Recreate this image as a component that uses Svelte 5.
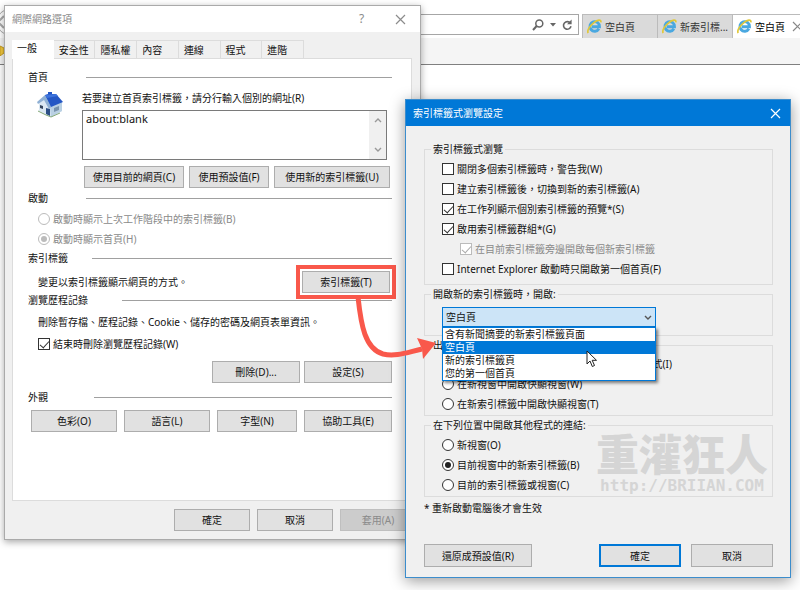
<script>
  const browserTabs = [
    { title: '空白頁', active: false },
    { title: '新索引標...', active: false },
    { title: '空白頁', active: true }
  ];
  const sheets = ['一般', '安全性', '隱私權', '內容', '連線', '程式', '進階'];
  const options = [
    { text: '關閉多個索引標籤時，警告我(W)', checked: false },
    { text: '建立索引標籤後，切換到新的索引標籤(A)', checked: false },
    { text: '在工作列顯示個別索引標籤的預覽*(S)', checked: true },
    { text: '啟用索引標籤群組*(G)', checked: true },
    { text: '在目前索引標籤旁邊開啟每個新索引標籤', checked: true, disabled: true },
    { text: 'Internet Explorer 啟動時只開啟第一個首頁(F)', checked: false }
  ];
  const popups = [
    '讓 Internet Explorer 決定開啟快顯視窗的方式(I)',
    '在新視窗中開啟快顯視窗(W)',
    '在新索引標籤中開啟快顯視窗(T)'
  ];
  const links = ['新視窗(O)', '目前視窗中的新索引標籤(B)', '目前的索引標籤或視窗(C)'];
  const pages = ['含有新聞摘要的新索引標籤頁面', '空白頁', '新的索引標籤頁', '您的第一個首頁'];
  let page = $state('空白頁');
  let home = $state('about:blank');
</script>

{#snippet cross()}
  <svg width="11" height="11" viewBox="0 0 11 11" aria-hidden="true"><path d="M1 1L10 10M10 1L1 10" fill="none" stroke="currentColor" stroke-width="1.2" /></svg>
{/snippet}

{#snippet heading(text, width)}
  <div class="heading"><h2 style:min-width="{width}px">{text}</h2><span></span></div>
{/snippet}

<div class="desktop">
  <header class="browser">
    <div class="nav">
      <svg class="back" width="28" height="28" viewBox="0 0 28 28" aria-hidden="true"><circle cx="14" cy="14" r="13" fill="#fff" stroke="#aaa" /><path d="M8 8L2 14L8 20" fill="none" stroke="#aaa" stroke-width="2" /></svg>
      <div class="address">
        <svg width="12" height="12" viewBox="0 0 12 12" aria-hidden="true"><circle cx="7.3" cy="4.5" r="3.5" fill="none" stroke="#666" stroke-width="1.5" /><path d="M4.7 7L1 11" stroke="#666" stroke-width="2" /></svg>
        <svg width="6" height="4" viewBox="0 0 6 4" aria-hidden="true"><path d="M0 0H6L3 3.5Z" fill="#666" /></svg>
        <svg width="11" height="12" viewBox="0 0 11 12" aria-hidden="true"><path d="M8.4 4.2A3.8 3.8 0 1 0 9 7.3" fill="none" stroke="#666" stroke-width="1.6" /><path d="M9.6 0.5V5.2H5Z" fill="#666" /></svg>
      </div>
      <div class="tabs">
        {#each browserTabs as tab}
          <div class="tab" class:active={tab.active}>
            <svg width="15" height="15" viewBox="0 0 15 15" aria-hidden="true">
              <path d="M11.9 9.8A4.8 4.8 0 1 1 12.5 7.8H5" fill="none" stroke="#4aa8e0" stroke-width="2.9" />
              <path d="M1.3 14C-0.3 12.3 2.5 7 6.6 3.8C10.5 0.6 14.5 0 13.8 3.4" fill="none" stroke="#e0c83a" stroke-width="1.7" />
            </svg>
            <span>{tab.title}</span>
            {#if tab.active}<i>{@render cross()}</i>{/if}
          </div>
        {/each}
      </div>
    </div>
    <div class="favorites">
      <svg width="12" height="12" viewBox="0 0 12 12" aria-hidden="true"><path d="M0 2L4 4L4 9L0 12Z" fill="#f3c93c" stroke="#c39a20" /></svg>
    </div>
  </header>

  <section class="window internet">
    <div class="title">
      <h1>網際網路選項</h1>
      <button class="plain help" type="button" aria-label="說明">?</button>
      <button class="plain" type="button" aria-label="關閉">{@render cross()}</button>
    </div>
    <div class="sheet">
      <nav class="sheet-tabs">
        {#each sheets as name, i}
          <button type="button" class:current={i === 0}>{name}</button>
        {/each}
      </nav>
      <div class="panel">
        {@render heading('首頁', 58)}
        <div class="home">
          <svg width="28" height="28" viewBox="0 0 28 28" aria-hidden="true">
            <path d="M3 10L10 5L22 12L26 11V20L15 26L3 20Z" fill="#dbe8f3" />
            <path d="M14 16L26 11V20L15 26Z" fill="#b9d0e3" />
            <path d="M1 11L9 4L15 16L13 18L8 9L2 13Z" fill="#8fb0d4" />
            <path d="M9 4L12 3V1H16V3L20 3L27 11L15 16Z" fill="#2457c5" />
            <path d="M9 4L20 3L22 5L11 7Z" fill="#3d73dc" />
            <path d="M10 17L14 18V25L10 23Z" fill="#2c4f85" />
            <path d="M4 14L7 15V18L4 17Z" fill="#35465e" />
            <path d="M18 17L23 15V19L18 21Z" fill="#7893ad" />
            <path d="M2 20L10 24L15 26L24 22" fill="none" stroke="#84a878" />
          </svg>
          <div class="home-fields">
            <label class="line" for="home">若要建立首頁索引標籤，請分行輸入個別的網址(R)</label>
            <div class="box">
              <textarea id="home" bind:value={home}></textarea>
              <div class="scroll">
                <svg width="8" height="5" viewBox="0 0 8 5" aria-hidden="true"><path d="M1 4L4 1L7 4" /></svg>
                <svg width="8" height="5" viewBox="0 0 8 5" aria-hidden="true"><path d="M1 1L4 4L7 1" /></svg>
              </div>
            </div>
            <div class="row home-buttons">
              <button class="btn w100" type="button">使用目前的網頁(C)</button>
              <button class="btn w80" type="button">使用預設值(F)</button>
              <button class="btn w116" type="button">使用新的索引標籤(U)</button>
            </div>
          </div>
        </div>

        {@render heading('啟動', 58)}
        <div class="indent startup">
          <label class="option off"><input type="radio" name="start" disabled />啟動時顯示上次工作階段中的索引標籤(B)</label>
          <label class="option off"><input type="radio" name="start" checked disabled />啟動時顯示首頁(H)</label>
        </div>

        {@render heading('索引標籤', 64)}
        <div class="indent row change">
          <p class="line">變更以索引標籤顯示網頁的方式。</p>
          <button class="btn w88 marked" type="button">索引標籤(T)</button>
        </div>

        {@render heading('瀏覽歷程記錄', 94)}
        <div class="indent history">
          <p class="line">刪除暫存檔、歷程記錄、Cookie、儲存的密碼及網頁表單資訊。</p>
          <label class="option"><input type="checkbox" checked />結束時刪除瀏覽歷程記錄(W)</label>
          <div class="row end">
            <button class="btn w88" type="button">刪除(D)...</button>
            <button class="btn w88" type="button">設定(S)</button>
          </div>
        </div>

        {@render heading('外觀', 66)}
        <div class="row looks">
          <button class="btn w86" type="button">色彩(O)</button>
          <button class="btn w86" type="button">語言(L)</button>
          <button class="btn w80" type="button">字型(N)</button>
          <button class="btn w88" type="button">協助工具(E)</button>
        </div>
      </div>
      <div class="row end footer">
        <button class="btn w76" type="button">確定</button>
        <button class="btn w76" type="button">取消</button>
        <button class="btn w76" type="button" disabled>套用(A)</button>
      </div>
    </div>
  </section>

  <section class="window tabbed">
    <div class="title">
      <h1>索引標籤式瀏覽設定</h1>
      <button class="plain" type="button" aria-label="關閉">{@render cross()}</button>
    </div>
    <div class="settings">
      <fieldset class="browse">
        <legend>索引標籤式瀏覽</legend>
        {#each options as o}
          <label class="option" class:off={o.disabled} class:sub={o.disabled}><input type="checkbox" checked={o.checked} disabled={o.disabled} />{o.text}</label>
        {/each}
      </fieldset>
      <fieldset class="opening">
        <legend><label for="page">開啟新的索引標籤時，開啟:</label></legend>
        <div class="combo">
          <select id="page" bind:value={page}>
            {#each pages as p}<option>{p}</option>{/each}
          </select>
          <svg class="chevron" width="8" height="5" viewBox="0 0 8 5" aria-hidden="true"><path d="M1 1L4 4L7 1" /></svg>
          <ul>
            {#each pages as p}<li class:picked={p === page}>{p}</li>{/each}
          </ul>
          <svg class="pointer" width="12" height="18" viewBox="0 0 12 18" aria-hidden="true"><path d="M1 1V14L4 11L6.3 16.5L8.5 15.5L6.2 10.3H10.5Z" fill="#fff" stroke="#222" /></svg>
        </div>
      </fieldset>
      <fieldset>
        <legend>出現快顯視窗時:</legend>
        {#each popups as text, i}
          <label class="option"><input type="radio" name="popup" checked={i === 0} />{text}</label>
        {/each}
      </fieldset>
      <fieldset class="links">
        <legend>在下列位置中開啟其他程式的連結:</legend>
        {#each links as text, i}
          <label class="option"><input type="radio" name="link" checked={i === 1} />{text}</label>
        {/each}
        <div class="watermark"><b>重灌狂人</b><span>http://BRIIAN.COM</span></div>
      </fieldset>
      <p class="line note">* 重新啟動電腦後才會生效</p>
      <div class="row actions">
        <button class="btn w108" type="button">還原成預設值(R)</button>
        <button class="btn w82 primary" type="button">確定</button>
        <button class="btn w82" type="button">取消</button>
      </div>
    </div>
  </section>

  <svg class="arrow" width="90" height="70" viewBox="350 295 90 70" aria-hidden="true">
    <path d="M358 297C361 325 365 349 383 354C396 357 408 352 422 349" fill="none" stroke="#f9584b" stroke-width="5" />
    <path d="M417 338L436 343L423 359L422 349Z" fill="#f9584b" />
  </svg>
</div>

<style>
  :global(body) { margin: 0; background: #fff; }
  * { box-sizing: border-box; }
  .desktop {
    position: relative; min-height: 100vh; overflow: hidden; background: #fff; color: #111;
    font-family: "Noto Sans", "Noto Sans CJK TC", sans-serif; font-size: 10px; line-height: 14px;
  }
  button, select, textarea { font: inherit; color: inherit; }
  h1, h2, p, ul { margin: 0; padding: 0; font-size: 10px; font-weight: 400; }
  svg { display: block; flex: none; }

  .nav { display: flex; align-items: flex-start; padding-top: 14px; height: 38px; }
  .back { margin: -6px 6px 0 -4px; }
  .address {
    flex: 1; display: flex; align-items: center; justify-content: flex-end; gap: 6px; height: 21px;
    padding-right: 5px; border: 1px solid #a6a6a6;
  }
  .tabs { display: flex; width: 218px; margin-left: 3px; height: 24px; overflow: hidden; }
  .tab {
    flex: none; display: flex; align-items: center; gap: 3px; width: 75px; padding-left: 4px; white-space: nowrap;
    background: #dadada; border: 1px solid #bbb; border-width: 1px 0 0 1px; color: #333;
  }
  .tab.active { background: #fff; color: #000; width: 90px; }
  .tab i { margin-left: 4px; color: #888; }
  .favorites { height: 27px; padding-top: 6px; background: #f5f5f5; border-bottom: 1px solid #808080; }

  .window { position: absolute; background: #f0f0f0; }
  .internet { left: 4px; top: 5px; width: 417px; border: 1px solid #aaa; box-shadow: 0 2px 7px rgba(0, 0, 0, 0.35); }
  .tabbed { left: 405px; top: 99px; width: 386px; border: 1px solid #3c8dcc; box-shadow: 0 3px 14px rgba(0, 0, 0, 0.4); }
  .title { display: flex; align-items: center; height: 26px; padding: 0 9px 0 7px; }
  .title h1 { flex: 1; }
  .internet .title { background: #fff; color: #8c8c8c; padding-right: 14px; }
  .tabbed .title { background: #0078d7; color: #fff; }
  .plain { padding: 0; margin-left: 24px; width: 11px; height: 16px; border: 0; background: none; }
  .plain svg { margin: 0 auto; }
  .help { font-size: 12px; margin-right: 4px; }

  .sheet { padding: 8px 8px 8px 7px; }
  .sheet-tabs { display: flex; height: 18px; padding-right: 108px; }
  .sheet-tabs button {
    flex: 1; padding: 0 0 0 5px; text-align: left; white-space: nowrap;
    background: #f0f0f0; border: 1px solid #dcdcdc; border-width: 1px 1px 0 0;
  }
  .sheet-tabs .current { position: relative; height: 19px; padding-bottom: 4px; background: #fff; border-color: #fff; }
  .panel { padding: 11px 19px 68px 15px; background: #fff; border: 1px solid #dcdcdc; }
  .heading { display: flex; align-items: center; }
  .heading span { flex: 1; height: 1px; background: #a0a0a0; }
  .line { display: block; height: 14px; white-space: nowrap; }
  .row { display: flex; gap: 6px; }
  .end { justify-content: flex-end; }
  .indent { padding-left: 10px; }

  .home { display: flex; gap: 18px; padding: 7px 5px 3px 8px; }
  .home-fields { flex: 1; }
  .box { display: flex; height: 50px; margin: 5px 0 6px; border: 1px solid #7a7a7a; }
  textarea { flex: 1; min-width: 0; padding: 1px 3px; border: 0; resize: none; outline: 0; font-size: 11px; background: #fff; }
  .scroll { display: flex; flex-direction: column; justify-content: space-between; align-items: center; width: 17px; padding: 7px 0; background: #f0f0f0; }
  .scroll path, .chevron path { fill: none; stroke: #999; stroke-width: 1.4; }
  .home-buttons { margin: 0 -4px 0 2px; gap: 5px; }
  .startup { padding-top: 4px; padding-bottom: 2px; }
  .change { padding-top: 6px; padding-right: 2px; justify-content: space-between; align-items: center; }
  .history { padding-top: 8px; padding-bottom: 7px; }
  .history .option { margin: 5px 0 7px; }
  .history .row { gap: 4px; }
  .looks { padding: 6px 0 0 3px; justify-content: space-between; }
  .footer { margin: 8px -4px 0 0; gap: 7px; }

  .btn { height: 22px; padding: 0; border: 1px solid #adadad; background: #e1e1e1; white-space: nowrap; }
  .btn:disabled { border-color: #bfbfbf; background: #ccc; color: #8a8a8a; }
  .w76 { width: 76px; } .w80 { width: 80px; } .w82 { width: 82px; } .w86 { width: 86px; } .w88 { width: 88px; }
  .w100 { width: 100px; } .w108 { width: 108px; } .w116 { width: 116px; }
  .marked { outline: 4px solid #f9584b; outline-offset: 2px; }
  .primary { border: 2px solid #0078d7; }

  .option { display: flex; align-items: center; gap: 3px; height: 20px; white-space: nowrap; }
  .option input {
    appearance: none; flex: none; display: grid; place-items: center; width: 12px; height: 12px; margin: 0;
    border: 1px solid #333; background: #fff;
  }
  .option input[type='radio'] { border-radius: 50%; }
  .option input[type='radio']:checked::after { content: ''; width: 6px; height: 6px; border-radius: 50%; background: #222; }
  .option input[type='checkbox']:checked::after {
    content: ''; width: 4px; height: 8px; margin-top: -2px; border: solid #333; border-width: 0 1px 1px 0; transform: rotate(42deg);
  }
  .off { color: #8a8a8a; }
  .option.off input { border-color: #bbb; }
  .option.off input[type='radio']:checked::after { background: #bbb; }
  .option.off input[type='checkbox']:checked::after { border-color: #aaa; }
  .sub { margin-left: 18px; }

  .settings { padding: 16px 17px 10px 18px; }
  fieldset { position: relative; min-width: 0; margin: 0 0 2px; padding: 2px 17px 1px; border: 1px solid #dcdcdc; }
  legend { height: 14px; margin-left: -11px; padding: 0 2px; }
  .browse { padding-top: 3px; padding-bottom: 5px; }
  .opening { padding-top: 6px; padding-bottom: 8px; }
  .links { padding-top: 3px; }
  .combo { position: relative; width: 214px; height: 20px; }
  select { display: block; appearance: none; width: 100%; height: 20px; padding: 0 3px; border: 1px solid #0078d7; border-radius: 0; background: #cce4f7; }
  .chevron { position: absolute; right: 4px; top: 8px; }
  .chevron path { stroke: #555; }
  ul {
    position: absolute; z-index: 2; left: 0; top: 20px; width: 100%; list-style: none; background: #fff;
    border: 1px solid #0078d7; box-shadow: 2px 2px 3px rgba(0, 0, 0, 0.5);
  }
  li { height: 13px; padding-left: 2px; line-height: 13px; }
  .picked { background: #0078d7; color: #fff; }
  .pointer { position: absolute; z-index: 3; left: 144px; top: 43px; }
  .watermark { position: absolute; right: 4px; top: 0; color: #d5d5d5; text-align: center; }
  .watermark b { display: block; font-size: 43px; line-height: 46px; font-weight: 900; }
  .watermark span { display: block; font: bold 16px/16px "DejaVu Sans Mono", monospace; }
  .note { margin-top: 4px; }
  .actions { margin-top: 29px; gap: 10px; }
  .actions .btn { height: 23px; }
  .actions .primary { margin-left: auto; }
  .arrow { position: absolute; left: 350px; top: 295px; }
</style>
